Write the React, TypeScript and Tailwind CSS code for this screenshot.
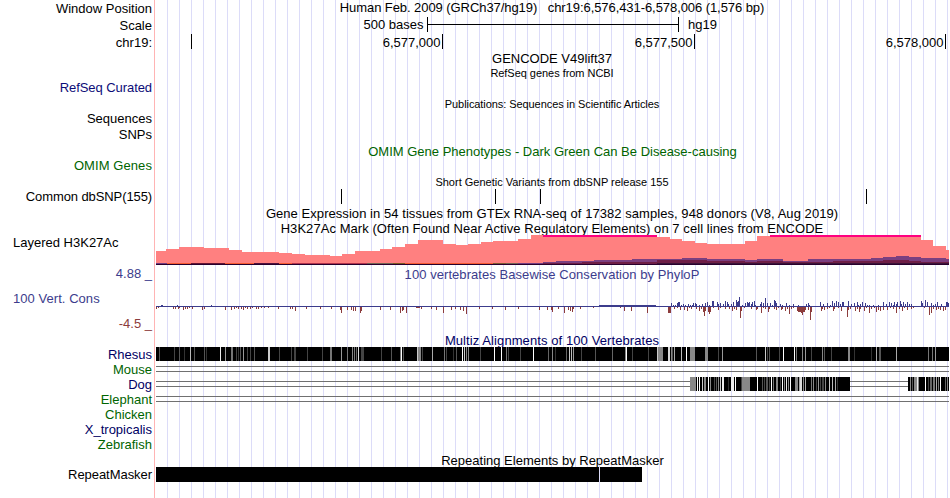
import { type ReactNode } from 'react';

type Stripe = [x: number, width: number, color: string];
type Point = [x: number, value: number];

const LEFT = 155;
const RIGHT = 949;

// label, spacing class, colour class
const labels: [string, string, string][] = [
  ['Window Position', 'mt-px', 'text-black'],
  ['Scale', 'mt-0.5', 'text-black'],
  ['chr19:', 'mt-0.5', 'text-black'],
  ['RefSeq Curated', 'mt-[30px] tracking-[-0.07px]', 'text-[#0c0c78]'],
  ['Sequences', 'mt-4', 'text-black'],
  ['SNPs', 'mt-px', 'text-black'],
  ['OMIM Genes', 'mt-4 tracking-[0.08px]', 'text-[#006400]'],
  ['Common dbSNP(155)', 'mt-4 tracking-[-0.1px]', 'text-black'],
  ['Layered H3K27Ac', 'mt-[31px] self-start pl-[13px]', 'text-black'],
  ['4.88 _', 'mt-4', 'text-[#3c3c8c]'],
  ['100 Vert. Cons', 'mt-2.5 self-start pl-[13px] tracking-[0.05px]', 'text-[#3c3c8c]'],
  ['-4.5 _', 'mt-2.5', 'text-[#8c3c3c]'],
  ['Rhesus', 'mt-4', 'text-[#000064]'],
  ['Mouse', '', 'text-[#006400]'],
  ['Dog', '', 'text-[#000064]'],
  ['Elephant', '', 'text-[#006400]'],
  ['Chicken', '', 'text-[#006400]'],
  ['X_tropicalis', '', 'text-[#000064]'],
  ['Zebrafish', '', 'text-[#006400]'],
  ['RepeatMasker', 'mt-[15px] tracking-[-0.05px]', 'text-black'],
];

// top edge of the main H3K27Ac signal
const signal: Point[] = [
  [156, 251], [166, 249], [179, 247], [204, 248], [229, 250], [242, 252], [279, 253], [292, 254],
  [305, 255], [330, 256], [342, 254], [355, 251], [380, 249], [392, 247], [405, 244], [418, 240],
  [443, 244], [456, 245], [468, 244], [481, 242], [493, 241], [518, 239], [531, 235], [657, 237],
  [670, 239], [682, 241], [695, 243], [707, 244], [745, 241], [757, 236], [770, 235], [921, 240],
  [933, 246], [946, 250],
];

const purple: Point[] = [
  [543, 262], [556, 261], [594, 260], [632, 259], [682, 258], [707, 259], [745, 260], [757, 259],
  [783, 261], [808, 259], [871, 258], [883, 257], [896, 256], [909, 257], [921, 258], [946, 259],
];

const maroon: Point[] = [
  [543, 263], [582, 262], [632, 262], [657, 260], [707, 261], [745, 262], [757, 261], [783, 262],
  [833, 261], [883, 260], [909, 261], [921, 262],
];

const base: Stripe[] = [
  [156, 11, '#733c80'], [167, 24, '#f65a30'], [191, 34, '#641432'], [225, 17, '#f65a30'],
  [242, 12, '#f65a30'], [254, 25, '#50103c'], [279, 13, '#f65a30'], [292, 75, '#b0324c'],
  [367, 26, '#726452'], [393, 12, '#7c5a20'], [405, 88, '#f65a30'], [493, 13, '#7c5a30'],
  [506, 12, '#726452'], [518, 25, '#733c80'],
];

const blue: Point[] = [
  [161, 1], [162, 1], [177, 1], [211, 1], [671, 3], [673, 1], [675, 1], [677, 3], [678, 4], [679, 4],
  [681, 1], [683, 2], [685, 1], [688, 2], [690, 1], [692, 1], [693, 3], [695, 3], [696, 2], [699, 1],
  [702, 2], [705, 3], [707, 4], [709, 1], [712, 5], [713, 5], [717, 4], [718, 2], [720, 3], [723, 2],
  [725, 5], [727, 4], [728, 2], [731, 2], [733, 4], [736, 6], [737, 4], [738, 5], [739, 9], [742, 1],
  [745, 3], [747, 4], [748, 3], [749, 4], [751, 2], [752, 4], [754, 5], [755, 1], [760, 2], [761, 4],
  [763, 3], [765, 8], [767, 3], [770, 3], [772, 1], [774, 6], [775, 5], [776, 3], [780, 2], [782, 1],
  [786, 3], [789, 1], [793, 2], [798, 1], [806, 2], [808, 3], [809, 1], [820, 4], [823, 2], [827, 3],
  [830, 1], [832, 5], [834, 3], [836, 5], [838, 4], [840, 2], [842, 4], [843, 4], [848, 5], [851, 2],
  [854, 3], [857, 4], [858, 1], [860, 2], [862, 4], [865, 3], [867, 1], [869, 1], [873, 1], [878, 1],
  [883, 4], [886, 2], [889, 4], [891, 3], [893, 1], [894, 4], [896, 2], [897, 4], [900, 5], [901, 2],
  [903, 4], [905, 2], [907, 4], [909, 2], [911, 2], [921, 5], [922, 3], [925, 6], [927, 4], [931, 3],
  [933, 1], [935, 2], [937, 4], [941, 2], [946, 4], [947, 4], [948, 3],
];

const red: Point[] = [
  [156, 2], [158, 1], [173, 2], [175, 2], [178, 2], [179, 1], [183, 3], [185, 2], [187, 2], [189, 1],
  [192, 2], [202, 3], [204, 2], [225, 3], [231, 3], [234, 2], [236, 1], [238, 2], [241, 2], [243, 3],
  [245, 1], [247, 2], [250, 2], [252, 1], [256, 2], [258, 2], [261, 1], [264, 1], [268, 1], [278, 2],
  [290, 2], [292, 2], [295, 4], [306, 2], [320, 2], [331, 2], [340, 3], [341, 6], [347, 3], [351, 3],
  [353, 4], [355, 4], [360, 6], [361, 4], [380, 3], [390, 3], [400, 6], [402, 4], [403, 3], [406, 6],
  [416, 1], [417, 1], [418, 1], [419, 1], [421, 2], [431, 2], [436, 3], [443, 6], [451, 3], [455, 2],
  [460, 3], [463, 4], [466, 7], [479, 2], [492, 2], [505, 3], [518, 2], [539, 3], [547, 3], [551, 3],
  [552, 5], [558, 2], [564, 6], [568, 3], [570, 4], [572, 5], [573, 2], [580, 2], [593, 1], [620, 1],
  [624, 4], [631, 4], [647, 6], [668, 6], [669, 6], [670, 6], [674, 2], [677, 1], [680, 3], [684, 3],
  [687, 4], [689, 1], [691, 2], [696, 2], [699, 4], [701, 2], [703, 5], [704, 9], [705, 4], [708, 5],
  [709, 7], [710, 5], [713, 1], [718, 3], [720, 1], [725, 2], [729, 2], [732, 4], [734, 2], [736, 3],
  [740, 11], [741, 4], [744, 1], [751, 2], [756, 3], [757, 2], [761, 6], [763, 1], [765, 2], [768, 5],
  [769, 2], [774, 2], [776, 3], [778, 1], [781, 3], [782, 2], [785, 4], [787, 2], [789, 7], [791, 2],
  [793, 1], [797, 4], [798, 5], [799, 5], [800, 5], [801, 6], [802, 8], [803, 5], [804, 5], [805, 3],
  [808, 3], [810, 13], [811, 5], [821, 4], [822, 2], [824, 3], [827, 2], [829, 1], [833, 4], [834, 2],
  [838, 1], [841, 4], [847, 10], [848, 3], [850, 2], [855, 4], [857, 2], [859, 5], [860, 2], [864, 4],
  [866, 1], [869, 6], [871, 2], [874, 1], [876, 5], [878, 3], [880, 4], [883, 3], [887, 3], [890, 1],
  [893, 2], [896, 6], [899, 2], [902, 4], [904, 1], [907, 3], [911, 2], [913, 1], [924, 1], [929, 8],
  [931, 6], [933, 2], [936, 3], [938, 2], [940, 3], [943, 4], [945, 3],
];

const rhesus: Stripe[] = [
  [159, 1, '#555'], [174, 1, '#444'], [179, 1, '#555'], [184, 1, '#333'], [190, 1, '#bbb'], [194, 1, '#555'],
  [204, 1, '#555'], [206, 1, '#333'], [220, 1, '#eee'], [225, 1, '#999'], [231, 2, '#777'], [236, 1, '#444'],
  [238, 1, '#333'], [240, 1, '#555'], [243, 1, '#999'], [247, 1, '#444'], [250, 1, '#444'], [254, 1, '#555'],
  [268, 2, '#ccc'], [279, 1, '#444'], [291, 1, '#444'], [294, 2, '#444'], [307, 1, '#444'], [322, 1, '#444'],
  [330, 2, '#777'], [341, 1, '#999'], [347, 1, '#777'], [352, 1, '#888'], [354, 1, '#777'], [356, 1, '#666'],
  [358, 1, '#ddd'], [361, 3, '#444'], [381, 1, '#444'], [391, 1, '#555'], [400, 1, '#777'], [401, 1, '#fff'],
  [403, 1, '#555'], [417, 1, '#ccc'], [418, 3, '#888'], [422, 1, '#444'], [432, 1, '#aaa'], [444, 1, '#777'],
  [446, 1, '#444'], [453, 1, '#333'], [456, 1, '#555'], [462, 1, '#fff'], [464, 1, '#ccc'], [466, 1, '#888'],
  [468, 1, '#888'], [480, 1, '#444'], [494, 1, '#fff'], [501, 1, '#fff'], [506, 1, '#777'], [508, 1, '#444'],
  [520, 1, '#444'], [533, 1, '#fff'], [548, 1, '#666'], [552, 1, '#888'], [555, 1, '#333'], [566, 1, '#666'],
  [569, 1, '#ccc'], [571, 1, '#bbb'], [573, 1, '#999'], [581, 1, '#444'], [595, 1, '#555'], [612, 1, '#666'],
  [625, 1, '#888'], [626, 1, '#fff'], [632, 1, '#444'], [648, 1, '#444'], [657, 1, '#ccc'], [658, 5, '#888'],
  [668, 2, '#ddd'], [671, 1, '#888'], [672, 1, '#555'], [674, 1, '#aaa'], [681, 1, '#bbb'], [686, 1, '#fff'],
  [690, 5, '#888'], [705, 3, '#888'], [718, 1, '#444'], [722, 1, '#999'], [756, 1, '#555'], [765, 1, '#ccc'],
  [767, 1, '#444'], [769, 1, '#555'], [779, 1, '#444'], [783, 1, '#fff'], [794, 1, '#fff'], [796, 1, '#777'],
  [802, 1, '#888'], [805, 1, '#999'], [811, 1, '#444'], [822, 1, '#888'], [824, 1, '#555'], [831, 1, '#444'],
  [848, 2, '#888'], [854, 1, '#333'], [871, 1, '#333'], [876, 1, '#aaa'], [879, 2, '#555'], [896, 1, '#aaa'],
  [928, 1, '#777'], [932, 1, '#777'], [935, 1, '#999'],
];

const dog: Stripe[] = [
  [690, 6, '#888'], [697, 1, '#fff'], [699, 1, '#fff'], [702, 1, '#ccc'], [704, 2, '#888'], [708, 1, '#fff'],
  [710, 1, '#888'], [714, 1, '#444'], [716, 1, '#555'], [718, 1, '#888'], [720, 1, '#ccc'], [722, 2, '#eee'],
  [728, 1, '#333'], [731, 3, '#eee'], [735, 1, '#fff'], [741, 1, '#444'], [742, 8, '#888'], [757, 1, '#fff'],
  [762, 1, '#555'], [764, 1, '#444'], [766, 2, '#555'], [769, 1, '#444'], [771, 1, '#fff'], [773, 1, '#777'],
  [776, 2, '#888'], [780, 1, '#444'], [782, 1, '#fff'], [784, 1, '#888'], [786, 1, '#eee'], [788, 1, '#888'],
  [790, 1, '#fff'], [795, 3, '#888'], [799, 1, '#aaa'], [800, 2, '#ddd'], [803, 1, '#888'], [805, 1, '#aaa'],
  [811, 1, '#777'], [813, 1, '#888'], [816, 1, '#444'], [818, 1, '#999'], [820, 1, '#444'], [822, 2, '#444'],
  [825, 1, '#888'], [829, 1, '#ccc'], [832, 1, '#bbb'], [835, 1, '#aaa'], [837, 1, '#333'], [910, 1, '#888'],
  [912, 1, '#555'], [914, 3, '#888'], [917, 1, '#eee'], [918, 1, '#888'], [925, 1, '#fff'], [928, 1, '#444'],
  [930, 2, '#666'], [933, 2, '#777'], [936, 1, '#aaa'], [938, 1, '#777'], [940, 1, '#fff'], [945, 1, '#666'],
  [947, 1, '#888'],
];

// stepped area from a list of edges down to the given floor
function area(points: Point[], floor: number) {
  let d = `M${points[0][0]} ${floor}`;
  points.forEach(([x, y], i) => {
    const next = i + 1 < points.length ? points[i + 1][0] : RIGHT;
    d += `V${y}H${next}`;
  });
  return `${d}V${floor}Z`;
}

// one drawing strip, in browser-window coordinates
function Strip({ top, height, className = '', children }: { top: number; height: number; className?: string; children: ReactNode }) {
  return (
    <svg
      width={RIGHT - LEFT}
      height={height}
      viewBox={`${LEFT} ${top} ${RIGHT - LEFT} ${height}`}
      shapeRendering="crispEdges"
      className={`block shrink-0 ${className}`}
    >
      {children}
    </svg>
  );
}

function Title({ className = '', children }: { className?: string; children: ReactNode }) {
  return <div className={`h-[15px] shrink-0 text-center whitespace-pre ${className}`}>{children}</div>;
}

function Bars({ data, down, color }: { data: Point[]; down?: boolean; color: string }) {
  return (
    <g fill={color}>
      {data.map(([x, h]) => (
        <rect key={x} x={x} y={down ? 307 : 306 - h} width={1} height={h} />
      ))}
    </g>
  );
}

function Stripes({ data, y, height }: { data: Stripe[]; y: number; height: number }) {
  return (
    <>
      {data.map(([x, w, color]) => (
        <rect key={x} x={x} y={y} width={w} height={height} fill={color} />
      ))}
    </>
  );
}

export default function App() {
  return (
    <div className="flex h-[498px] w-[950px] overflow-hidden bg-white font-['Liberation_Sans',Arial,sans-serif] text-[13px] leading-[15px] text-black">
      {/* Track labels */}
      <div className="flex w-[154px] shrink-0 flex-col items-end pr-0.5 whitespace-pre">
        {labels.map(([text, spacing, color]) => (
          <div key={text} className={`h-[15px] shrink-0 ${spacing} ${color}`}>
            {text}
          </div>
        ))}
      </div>

      {/* Track area with guide lines */}
      <div className="flex w-[795px] flex-col border-l border-[#ffb4b4] [background:repeating-linear-gradient(to_right,#dcdcf8_0_1px,transparent_1px_12px)_12px_0/782px_100%_no-repeat]">
        <Title className="tracking-[-0.07px]">Human Feb. 2009 (GRCh37/hg19)   chr19:6,576,431-6,578,006 (1,576 bp)</Title>

        <Strip top={17} height={15} className="mt-0.5">
          <path d="M427 17h1v7h250v-7h1v15h-1v-7H428v7h-1z" />
          <text x="423.5" y="29" textAnchor="end">500 bases</text>
          <text x="688" y="29">hg19</text>
        </Strip>
        <Strip top={34} height={15} className="mt-0.5">
          {[191, 442, 694, 945].map(x => (
            <rect key={x} x={x} y={34} width={1} height={15} />
          ))}
          <text x="440.5" y="47" textAnchor="end">6,577,000</text>
          <text x="692.5" y="47" textAnchor="end">6,577,500</text>
          <text x="943.5" y="47" textAnchor="end">6,578,000</text>
        </Strip>

        <Title className="mt-0.5">GENCODE V49lift37</Title>
        <Title className="text-[11px] tracking-[-0.04px]">RefSeq genes from NCBI</Title>
        <Title className="mt-4 text-[11px] tracking-[-0.07px]">Publications: Sequences in Scientific Articles</Title>
        <Title className="mt-8 pl-px text-[#006400]">OMIM Gene Phenotypes - Dark Green Can Be Disease-causing</Title>
        <Title className="mt-4 text-[11px]">Short Genetic Variants from dbSNP release 155</Title>

        <Strip top={189} height={15} className="-mt-px">
          {[341, 495, 540, 866].map(x => (
            <rect key={x} x={x} y={189} width={1} height={15} />
          ))}
        </Strip>

        <Title className="mt-0.5 tracking-[0.055px]">Gene Expression in 54 tissues from GTEx RNA-seq of 17382 samples, 948 donors (V8, Aug 2019)</Title>
        <Title className="tracking-[0.06px]">H3K27Ac Mark (Often Found Near Active Regulatory Elements) on 7 cell lines from ENCODE</Title>

        {/* Layered H3K27Ac */}
        <Strip top={235} height={30} className="-mt-px">
          <path d={area(signal, 264)} fill="#ff8080" />
          <path d={area(purple, 264)} fill="#7b3f80" />
          <path d={area(maroon, 264)} fill="#6e1e46" />
          <Stripes data={base} y={263} height={1} />
          <rect x={657} y={263} width={292} height={1} fill="#3c1438" />
          <rect x={156} y={264} width={793} height={1} fill="#28002d" />
          <rect x={543} y={235} width={114} height={2} fill="#ff0080" />
          <rect x={770} y={235} width={151} height={2} fill="#ff0080" />
        </Strip>

        {/* PhyloP conservation */}
        <Title className="mt-0.5 tracking-[0.06px] text-[#3c3c8c]">100 vertebrates Basewise Conservation by PhyloP</Title>
        <Strip top={282} height={51}>
          <rect x={156} y={306} width={793} height={1} fill="#3c3c8c" />
          <rect x={599} y={305} width={57} height={1} fill="#3c3c8c" />
          <Bars data={blue} color="#3c3c8c" />
          <Bars data={red} down color="#8c3c3c" />
        </Strip>

        {/* Multiz alignments */}
        <Title className="tracking-[0.09px] text-[#000064]">Multiz Alignments of 100 Vertebrates</Title>
        <Strip top={347} height={105} className="-mt-px">
          <rect x={156} y={347} width={793} height={14} />
          <Stripes data={rhesus} y={347} height={14} />
          {[366, 371, 381, 386, 396, 401].map(y => (
            <rect key={y} x={156} y={y} width={793} height={1} fill="#707070" />
          ))}
          <rect x={690} y={377} width={160} height={14} />
          <rect x={908} y={377} width={41} height={14} />
          <Stripes data={dog} y={377} height={14} />
        </Strip>

        <Title className="mt-px pl-px">Repeating Elements by RepeatMasker</Title>
        <Strip top={467} height={15} className="-mt-px">
          <rect x={156} y={467} width={443} height={15} />
          <rect x={600} y={467} width={42} height={15} />
        </Strip>
      </div>
    </div>
  );
}
